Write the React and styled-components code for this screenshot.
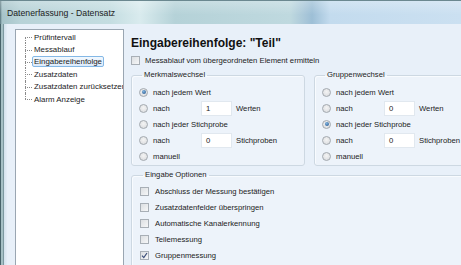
import React from 'react';
import styled, { createGlobalStyle, css } from 'styled-components';

const Global = createGlobalStyle`
  html, body { margin: 0; padding: 0; background: #e8f0f9; }
  body { font-family: 'Liberation Sans', Arial, sans-serif; color: #1b1b1b; }
  *, *::before, *::after { box-sizing: border-box; }
`;

const Window = styled.div`
  width: 461px;
  height: 265px;
  overflow: hidden;
  display: flex;
  flex-direction: column;
  background: #e8f0f9;
`;

const TitleBar = styled.div`
  height: 24px;
  flex: none;
  display: flex;
  align-items: center;
  padding-left: 7px;
  font-size: 8.7px;
  color: #1c1c1c;
  border-top: 1px solid #6b8890;
  background:
    linear-gradient(180deg, rgba(255, 255, 255, 0.25), rgba(255, 255, 255, 0) 60%),
    linear-gradient(90deg, #55727a 0, #a6c3c9 2px, #b7d2d7 20px, #c4dde1 110px, #d9ebee 140px,
      #b5d2d8 175px, #bfd9df 290px, #a9c7d9 305px, #9dbfd6 312px, #c3dbee 330px, #cbe0f1 100%);
`;

const Frame = styled.div`
  flex: 1;
  display: flex;
  min-height: 0;
`;

const LeftEdge = styled.div`
  width: 7px;
  flex: none;
  background: linear-gradient(90deg, #47636a 0, #47636a 1px, #a5c0c5 1px, #a5c0c5 3px,
    #7d99a1 3px, #7d99a1 4px, #d3e2ec 4px, #e4edf7 7px);
`;

const Content = styled.div`
  flex: 1;
  display: flex;
  gap: 7px;
  padding: 5px 0 0 8px;
  overflow: hidden;
`;

const TreePanel = styled.div`
  width: 109px;
  flex: none;
  margin-bottom: -20px;
  background: #fff;
  border: 1px solid #9aa6b2;
  padding: 1px 0 0 9px;
  overflow: hidden;
`;

const TreeList = styled.ul`
  list-style: none;
  margin: 0;
  padding: 0;
`;

const TreeItem = styled.li`
  position: relative;
  height: 12.4px;
  display: flex;
  align-items: center;
  padding-left: 7px;
  font-size: 7.9px;
  white-space: nowrap;
  &::before {
    content: '';
    position: absolute;
    left: 0;
    top: 50%;
    width: 7px;
    border-top: 1px dotted #8a8a8a;
  }
  &::after {
    content: '';
    position: absolute;
    left: 0;
    top: ${(p) => (p.$first ? '50%' : '0')};
    height: ${(p) => (p.$last || p.$first ? '50%' : '100%')};
    border-left: 1px dotted #8a8a8a;
  }
`;

const TreeLabel = styled.span`
  padding: 0 1px;
  line-height: 9px;
  border: 1px solid transparent;
  border-radius: 2px;
  ${(p) =>
    p.$selected &&
    css`
      border-color: #84b8e6;
      background: linear-gradient(180deg, #f2f8fe, #dcebfb);
    `}
`;

const Main = styled.div`
  flex: 1;
  min-width: 0;
  display: flex;
  flex-direction: column;
`;

const Heading = styled.h1`
  margin: 7px 0 0;
  font-size: 12px;
  line-height: 14px;
  font-weight: 700;
  color: #111;
`;

const CheckRow = styled.label`
  display: flex;
  align-items: center;
  gap: ${(p) => p.$gap || 5}px;
  height: ${(p) => p.$h || 16}px;
  margin-top: ${(p) => p.$mt || 0}px;
  font-size: 7.7px;
  white-space: nowrap;
`;

const Box = styled.span`
  width: 9px;
  height: 9px;
  flex: none;
  border: 1px solid #a8afb6;
  background: linear-gradient(135deg, #dcdfe2, #f6f7f8);
  display: flex;
  align-items: center;
  justify-content: center;
`;

const Radio = styled.span`
  width: 9px;
  height: 9px;
  flex: none;
  border-radius: 50%;
  border: 1px solid #a3a9af;
  background: radial-gradient(circle at 50% 40%, #f4f4f4, #d7d9dc);
  display: flex;
  align-items: center;
  justify-content: center;
  &::after {
    content: '';
    width: 4px;
    height: 4px;
    border-radius: 50%;
    background: radial-gradient(circle at 40% 35%, #7fb3e0, #1f4f86);
    display: ${(p) => (p.$on ? 'block' : 'none')};
  }
`;

const Groups = styled.div`
  display: grid;
  grid-template-columns: 174px 1fr;
  gap: 9px;
  margin-top: 5px;
  margin-right: -20px;
`;

const Group = styled.fieldset`
  margin: 0;
  min-width: 0;
  padding: 4px 0 1px ${(p) => p.$pad || 7}px;
  border: 1px solid #cdd8e2;
  border-radius: 3px;
  background: #edf3fa;
  box-shadow: inset 1px 1px 0 #f8fbfe;
  legend {
    font-size: 7.7px;
    line-height: 10px;
    padding: 0 2px;
    margin-left: 3px;
    color: #1b1b1b;
  }
`;

const OptionsGroup = styled(Group)`
  margin: 4px -20px 0 0;
  padding-top: 3px;
  padding-bottom: 20px;
`;

const RadioRow = styled.div`
  display: grid;
  grid-template-columns: 9px 48px 26px auto;
  column-gap: 5px;
  align-items: center;
  height: 16px;
  font-size: 7.7px;
  white-space: nowrap;
  & > :nth-child(2) {
    grid-column: ${(p) => (p.$wide ? '2 / 5' : 'auto')};
  }
`;

const NumInput = styled.span`
  height: 15px;
  margin-left: -5px;
  background: #fff;
  border: 1px solid #e1e8ef;
  display: flex;
  align-items: center;
  padding-left: 4px;
`;

const Suffix = styled.span`
  margin-left: -1px;
`;

function Check({ on }) {
  return (
    <Box>
      {on && (
        <svg width="7" height="7" viewBox="0 0 7 7">
          <path d="M1 3.6 L2.8 5.6 L6 1" fill="none" stroke="#3b4f7a" strokeWidth="1.2" />
        </svg>
      )}
    </Box>
  );
}

function RadioGroup({ title, selected, values }) {
  const rows = [
    { text: 'nach jedem Wert' },
    { text: 'nach', value: values[0], suffix: 'Werten' },
    { text: 'nach jeder Stichprobe' },
    { text: 'nach', value: values[1], suffix: 'Stichproben' },
    { text: 'manuell' },
  ];
  return (
    <Group>
      <legend>{title}</legend>
      {rows.map((r, i) => (
        <RadioRow key={i} $wide={r.value === undefined}>
          <Radio $on={i === selected} />
          <span>{r.text}</span>
          {r.value !== undefined && <NumInput>{r.value}</NumInput>}
          {r.suffix && <Suffix>{r.suffix}</Suffix>}
        </RadioRow>
      ))}
    </Group>
  );
}

const treeItems = [
  'Prüfintervall',
  'Messablauf',
  'Eingabereihenfolge',
  'Zusatzdaten',
  'Zusatzdaten zurücksetzen',
  'Alarm Anzeige',
];

const options = [
  ['Abschluss der Messung bestätigen', false],
  ['Zusatzdatenfelder überspringen', false],
  ['Automatische Kanalerkennung', false],
  ['Teilemessung', false],
  ['Gruppenmessung', true],
];

export default function App() {
  return (
    <>
      <Global />
      <Window>
        <TitleBar>Datenerfassung - Datensatz</TitleBar>
        <Frame>
          <LeftEdge />
          <Content>
            <TreePanel>
              <TreeList>
                {treeItems.map((t, i) => (
                  <TreeItem key={t} $first={i === 0} $last={i === treeItems.length - 1}>
                    <TreeLabel $selected={t === 'Eingabereihenfolge'}>{t}</TreeLabel>
                  </TreeItem>
                ))}
              </TreeList>
            </TreePanel>
            <Main>
              <Heading>Eingabereihenfolge: "Teil"</Heading>
              <CheckRow $h={12} $mt={6}>
                <Check />
                Messablauf vom übergeordneten Element ermitteln
              </CheckRow>
              <Groups>
                <RadioGroup title="Merkmalswechsel" selected={0} values={['1', '0']} />
                <RadioGroup title="Gruppenwechsel" selected={2} values={['0', '0']} />
              </Groups>
              <OptionsGroup $pad={8}>
                <legend>Eingabe Optionen</legend>
                {options.map(([t, on]) => (
                  <CheckRow key={t} $gap={6}>
                    <Check on={on} />
                    {t}
                  </CheckRow>
                ))}
              </OptionsGroup>
            </Main>
          </Content>
        </Frame>
      </Window>
    </>
  );
}
